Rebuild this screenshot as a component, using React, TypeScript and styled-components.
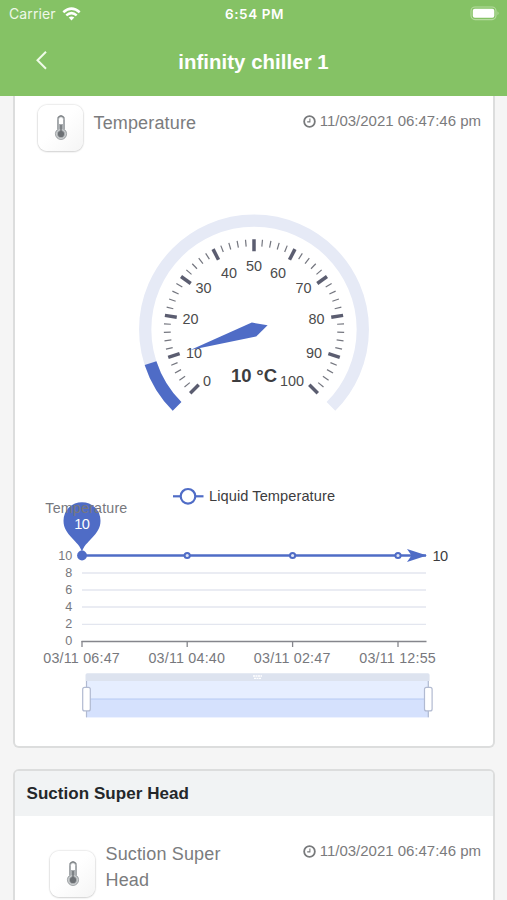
import React from "react";
import styled, { createGlobalStyle } from "styled-components";

const BLUE = "#4f6cc6";

const GlobalStyle = createGlobalStyle`
  * { box-sizing: border-box; }
  body {
    margin: 0;
    background: #f5f5f5;
    font-family: "Liberation Sans", Arial, sans-serif;
    overflow: hidden;
  }
`;

const Screen = styled.div`
  width: 507px;
  height: 900px;
  overflow: hidden;
  display: flex;
  flex-direction: column;
`;

const TopBar = styled.header`
  flex: none;
  height: 96px;
  background: #85c265;
  color: #fff;
`;

const StatusBar = styled.div`
  height: 27px;
  padding: 0 7px 0 9px;
  display: grid;
  grid-template-columns: 1fr auto 1fr;
  align-items: center;
  font-family: Inter, sans-serif;
  font-size: 13.5px;
`;

const Carrier = styled.div`
  display: flex;
  align-items: center;
  gap: 6px;
  font-size: 14px;
  letter-spacing: 0.1px;
  color: #eef8e9;
`;

const Clock = styled.div`
  font-weight: 600;
  letter-spacing: 0.6px;
`;

const Battery = styled.svg`
  justify-self: end;
`;

const NavBar = styled.div`
  height: 69px;
  display: grid;
  grid-template-columns: 82px 1fr 82px;
  align-items: center;
`;

const BackButton = styled.button`
  border: 0;
  padding: 0 0 3px 34px;
  background: none;
  display: flex;
`;

const Title = styled.h1`
  margin: 0;
  text-align: center;
  font-size: 20.4px;
  line-height: 24px;
  letter-spacing: 0.05px;
`;

const Content = styled.main`
  flex: 1;
  min-height: 0;
  padding: 0 12px 0 13px;
  overflow: hidden;
`;

const Card = styled.section<{ $continued?: boolean }>`
  border: 2px solid #dcdddd;
  background: #fff;
  overflow: hidden;
  ${(p) =>
    p.$continued
      ? `border-top: 0; border-radius: 0 0 6px 6px; height: 652px; margin-bottom: 21px;`
      : `border-radius: 6px 6px 0 0; height: 180px;`}
`;

const CardTitle = styled.h2`
  margin: 0;
  height: 45px;
  padding: 0 11.5px;
  background: #f1f3f4;
  color: #24272a;
  font-size: 17px;
  line-height: 45px;
  letter-spacing: 0.05px;
`;

const SensorRow = styled.div<{ $inset?: boolean }>`
  display: flex;
  align-items: flex-start;
  height: ${(p) => (p.$inset ? 84 : 64)}px;
  padding: ${(p) => (p.$inset ? "25px 12px 0 35px" : "8px 12px 0 23px")};
`;

const IconTile = styled.div<{ $drop?: boolean }>`
  flex: none;
  width: 45px;
  height: 46px;
  margin-top: ${(p) => (p.$drop ? 10 : 1)}px;
  border-radius: 9px;
  background: linear-gradient(135deg, #fff 45%, #f5f5f5);
  box-shadow: 0 0 2px rgba(0, 0, 0, 0.24), 0 1px 2px rgba(0, 0, 0, 0.12);
  display: flex;
  align-items: center;
  justify-content: center;
`;

const SensorName = styled.div<{ $width: number; $top: number }>`
  width: ${(p) => p.$width}px;
  margin: ${(p) => p.$top}px 0 0 10.5px;
  color: #7b7c7e;
  font-size: 18px;
  line-height: 26px;
  letter-spacing: 0.15px;
`;

const Stamp = styled.div<{ $top: number }>`
  display: flex;
  align-items: center;
  gap: 4px;
  margin: ${(p) => p.$top}px 0 0 auto;
  color: #7b7b7d;
  font-size: 15px;
  line-height: 18px;
  letter-spacing: -0.01px;
  white-space: nowrap;
`;

const Charts = styled.svg`
  display: block;
  font-family: "Liberation Sans", Arial, sans-serif;
`;

const Thermometer = () => (
  <svg width="14" height="28" viewBox="0 0 14 28" fill="none">
    <path d="M3.5 15.5V5.2a3.5 3.5 0 0 1 7 0v10.3a5.6 5.6 0 1 1-7 0Z" fill="#a9adb0" stroke="#a4a8ab" strokeWidth="1" />
    <path d="M5 10V5.3a2 2 0 0 1 4 0V10Z" fill="#fff" />
    <path d="M4 3.8a3.3 3.3 0 0 1 6 0" stroke="#74787b" />
    <circle cx="7" cy="20" r="4.5" stroke="#d7d9da" strokeWidth=".8" />
    <circle cx="7" cy="20" r="3.1" fill="#6c7074" />
    <path d="M7 11v8" stroke="#6c7074" strokeWidth="1.4" />
  </svg>
);

const Time = ({ top }: { top: number }) => (
  <Stamp $top={top}>
    <svg width="13" height="13" viewBox="0 0 13 13" fill="none" stroke="#77797b">
      <circle cx="6.5" cy="6.5" r="5.35" strokeWidth="1.8" />
      <path d="M6.9 3.4v3.5H4.2" strokeWidth="1.1" />
    </svg>
    <span>11/03/2021 06:47:46 pm</span>
  </Stamp>
);

const CX = 254;
const CY = 329.5;
const polar = (value: number, r: number): [number, number] => {
  const a = ((225 - value * 2.7) * Math.PI) / 180;
  return [CX + Math.cos(a) * r, CY - Math.sin(a) * r];
};
const arc = (from: number, to: number, r: number) => {
  const large = (to - from) * 2.7 > 180 ? 1 : 0;
  return `M${polar(from, r).join(" ")}A${r} ${r} 0 ${large} 1 ${polar(to, r).join(" ")}`;
};
const gaugeLabels: [number, number, number][] = [
  [0, 207, 380.5], [10, 194, 352.5], [20, 190.5, 319], [30, 203.5, 288], [40, 229, 273],
  [50, 254, 265.5], [60, 278, 273], [70, 303.5, 288], [80, 316.5, 319], [90, 314, 352.5], [100, 292, 380.5],
];

const Gauge = () => (
  <g>
    <path d={arc(0, 100, 108.8)} fill="none" stroke="#e6eaf6" strokeWidth="12.3" />
    <path d={arc(0, 10, 108.8)} fill="none" stroke={BLUE} strokeWidth="12.3" />
    {Array.from({ length: 51 }, (_, i) => {
      const major = i % 5 === 0;
      const [x1, y1] = polar(i * 2, 90.2);
      const [x2, y2] = polar(i * 2, major ? 78.2 : 83.3);
      return <line key={i} x1={x1} y1={y1} x2={x2} y2={y2} stroke={major ? "#5b5d70" : "#74767f"} strokeWidth={major ? 3.5 : 1.2} />;
    })}
    <g fill="#4b4b4c" fontSize="14.4" textAnchor="middle">
      {gaugeLabels.map(([v, x, y]) => (
        <text key={v} x={x} y={y + 5}>{v}</text>
      ))}
    </g>
    <path d="M267.6 325.2 251.8 322.6 190.4 350 256.2 336.4Z" fill={BLUE} />
    <text x="254" y="382" fontSize="18.5" fontWeight="bold" fill="#3d3d3f" textAnchor="middle" textLength="46">10 °C</text>
  </g>
);

const xTicks: [number, string][] = [[82, "03/11 06:47"], [187.2, "03/11 04:40"], [292.6, "03/11 02:47"], [398, "03/11 12:55"]];

const History = () => (
  <g>
    <g stroke={BLUE} strokeWidth="2.2" fill="#fff">
      <path d="M173 496.3h30.5" />
      <circle cx="188" cy="496.3" r="7.3" />
    </g>
    <text x="209" y="501.4" fontSize="14.6" fill="#3c3c3e" textLength="126">Liquid Temperature</text>

    {[573, 590, 607, 624.3].map((y) => (
      <path key={y} d={`M82 ${y}H426`} stroke="#e3e6ef" strokeWidth="1.3" />
    ))}
    <g fill="#77787d" fontSize="12.6" textAnchor="end">
      {[10, 8, 6, 4, 2, 0].map((v, i) => (
        <text key={v} x="72.2" y={559.7 + i * 17.1}>{v}</text>
      ))}
    </g>
    <path d="M81.5 641.5H426.5" stroke="#85868c" strokeWidth="1.5" />
    {xTicks.map(([x, label]) => (
      <g key={label}>
        <path d={`M${x} 641v6`} stroke="#85868c" strokeWidth="1.3" />
        <text x={x - 0.5} y="663.2" fontSize="14.3" fill="#77787d" textAnchor="middle" textLength="76.5">{label}</text>
      </g>
    ))}

    <path d="M82 555.5H426" stroke={BLUE} strokeWidth="2.3" />
    {[187.2, 292.6, 398].map((x) => (
      <circle key={x} cx={x} cy="555.5" r="2.6" fill="#dfe5f6" stroke={BLUE} strokeWidth="2" />
    ))}
    <path d="M427 555.5 407 549 411.5 555.5 407 562Z" fill={BLUE} />
    <text x="432.5" y="560.7" fontSize="14.6" fill="#3c3c3e" textLength="15.5">10</text>
    <path d="M82 552C79.5 541 63.5 535.5 63.5 520.7a18.5 18.5 0 0 1 37 0C100.5 535.5 84.5 541 82 552Z" fill={BLUE} />
    <circle cx="82" cy="555.5" r="4.9" fill={BLUE} />
    <text x="45.3" y="512.8" fontSize="14.3" fill="#77787d" textLength="82">Temperature</text>
    <text x="82" y="529" fontSize="14.6" fill="#fff" textAnchor="middle" textLength="15.5">10</text>

    <rect x="86" y="681" width="343" height="36.3" fill="#e6eeff" />
    <rect x="86" y="699" width="343" height="18.3" fill="#d5e1fd" />
    <path d="M86 699H429" stroke="#b5caf3" strokeWidth="1.2" />
    <path d="M85.5 681v-6q0-1.8 1.8-1.8H427.8q1.8 0 1.8 1.8v6Z" fill="#dde3ef" />
    <path d="M253 676h9M254 678.3h7" stroke="#fff" strokeWidth="1.3" strokeDasharray="2 .5" />
    {[86.5, 428.3].map((x) => (
      <g key={x} stroke="#b1bad1" strokeWidth="1.2">
        <path d={`M${x} 681v36.3`} />
        <rect x={x - 3.8} y="687.3" width="7.6" height="23.6" rx="2" fill="#fff" />
      </g>
    ))}
  </g>
);

export default function App() {
  return (
    <Screen>
      <GlobalStyle />
      <TopBar>
        <StatusBar>
          <Carrier>
            <span>Carrier</span>
            <svg width="19" height="14" viewBox="0 0 19 14" fill="none" stroke="#fff" strokeWidth="2.5">
              <path d="M1.3 5.2q8.2-7.2 16.4 0M4.3 8.4q5.2-4.5 10.4 0" />
              <path d="M6.7 10.6q2.8-2.2 5.6 0L9.5 13.5Z" fill="#fff" stroke="none" />
            </svg>
          </Carrier>
          <Clock>6:54 PM</Clock>
          <Battery width="30" height="15" viewBox="0 0 30 15">
            <rect x="1" y="1" width="25" height="12.6" rx="4" fill="none" stroke="#b6db9f" strokeWidth="1.1" />
            <rect x="2.8" y="2.8" width="21.5" height="9" rx="2" fill="#fff" />
            <path d="M27.5 5.3q2.2 2 0 4Z" fill="#b6db9f" />
          </Battery>
        </StatusBar>
        <NavBar>
          <BackButton aria-label="Back">
            <svg width="15" height="20" viewBox="0 0 15 20" fill="none" stroke="#effbe8" strokeWidth="2">
              <path d="M12 1.8 3.5 10.3 12 18.8" />
            </svg>
          </BackButton>
          <Title>infinity chiller 1</Title>
        </NavBar>
      </TopBar>
      <Content>
        <Card $continued>
          <SensorRow>
            <IconTile><Thermometer /></IconTile>
            <SensorName $width={150} $top={6}>Temperature</SensorName>
            <Time top={8} />
          </SensorRow>
          <Charts width="478" height="580" viewBox="15 160 478 580">
            <Gauge />
            <History />
          </Charts>
        </Card>
        <Card>
          <CardTitle>Suction Super Head</CardTitle>
          <SensorRow $inset>
            <IconTile $drop><Thermometer /></IconTile>
            <SensorName $width={140} $top={0}>Suction Super Head</SensorName>
            <Time top={1} />
          </SensorRow>
        </Card>
      </Content>
    </Screen>
  );
}
